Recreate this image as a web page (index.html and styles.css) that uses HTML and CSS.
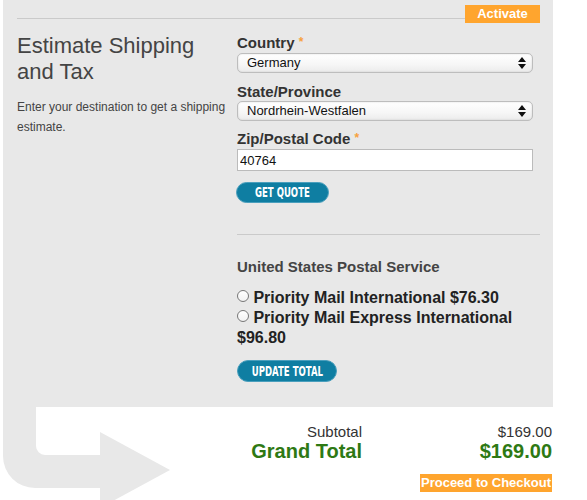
FILE: index.html
```html
<!DOCTYPE html>
<html>
<head>
<meta charset="utf-8">
<link rel="stylesheet" href="styles.css">
</head>
<body>
<div class="page">
  <svg class="arrow" width="200" height="110" viewBox="0 400 200 110" aria-hidden="true">
    <path d="M3 400 L3 456 A32 32 0 0 0 35 488 L100 488 L100 508 L170 470 L100 432 L100 455 L45 455 A9 9 0 0 1 36 446 L36 400 Z" fill="#e8e8e8"/>
  </svg>
  <section class="panel">
    <div class="topbar">
      <div class="rule"></div>
      <a class="activate">Activate</a>
    </div>
    <div class="cols">
      <div class="intro">
        <h2>Estimate Shipping and Tax</h2>
        <p>Enter your destination to get a shipping estimate.</p>
      </div>
      <form class="form">
        <label class="lbl first">Country <span class="req">*</span></label>
        <div class="selectbox">
          <select><option>Germany</option></select>
          <svg class="updown" width="8" height="12" viewBox="0 0 8 12"><path d="M4 0 L8 5 L0 5 Z M0 7 L8 7 L4 12 Z" fill="#111"/></svg>
        </div>
        <label class="lbl">State/Province</label>
        <div class="selectbox tight">
          <select><option>Nordrhein-Westfalen</option></select>
          <svg class="updown" width="8" height="12" viewBox="0 0 8 12"><path d="M4 0 L8 5 L0 5 Z M0 7 L8 7 L4 12 Z" fill="#111"/></svg>
        </div>
        <label class="lbl zip">Zip/Postal Code <span class="req">*</span></label>
        <input class="text" type="text" value="40764">
        <button type="button" class="pill quote"><span>GET QUOTE</span></button>
        <hr class="sep">
        <h3>United States Postal Service</h3>
        <div class="rates">
          <label><input type="radio" name="rate"> Priority Mail International $76.30</label>
          <label><input type="radio" name="rate"> Priority Mail Express International $96.80</label>
        </div>
        <button type="button" class="pill update"><span>UPDATE TOTAL</span></button>
      </form>
    </div>
  </section>
  <section class="summary">
    <div class="row sub"><span>Subtotal</span><span>$169.00</span></div>
    <div class="row grand"><span>Grand Total</span><span>$169.00</span></div>
    <div class="checkout"><a class="proceed">Proceed to Checkout</a></div>
  </section>
</div>
</body>
</html>
```
FILE: styles.css
```css
* { box-sizing: border-box; }
html, body { margin: 0; padding: 0; background: #fff; }
body { font-family: "Liberation Sans", Arial, sans-serif; color: #333; }

.page { position: relative; width: 587px; height: 500px; overflow: hidden; }

.arrow { position: absolute; left: 0; top: 400px; z-index: 0; }

.panel {
  position: relative;
  z-index: 1;
  margin-left: 3px;
  width: 550px;
  background: #e8e8e8;
  padding: 5px 13px 25px 14px;
}

.topbar { display: flex; height: 18px; }
.rule { flex: 1; border-top: 1px solid #cacaca; margin-top: 13px; }
.activate {
  width: 75px; height: 18px;
  background: #ffa52e;
  color: #fff; font-weight: bold; font-size: 13px;
  line-height: 18px; text-align: center;
}

.cols { display: grid; grid-template-columns: 220px 1fr; }

.intro h2 {
  margin: 10px 0 0;
  font-size: 22px; line-height: 26px; font-weight: normal;
  color: #444;
}
.intro p {
  margin: 12px 0 0;
  font-size: 12px; line-height: 20px; color: #444;
}

.form { display: flex; flex-direction: column; align-items: flex-start; }
.lbl { font-size: 15px; font-weight: bold; line-height: 18px; height: 18px; color: #333; margin-top: 10px; }
.lbl.first { margin-top: 11px; }
.lbl.zip { margin-top: 9px; }
.req { color: #f7a13c; font-size: 12px; line-height: 0; position: relative; top: -2px; }

.selectbox { position: relative; width: 296px; height: 20px; margin-top: 1px; }
.selectbox.tight { margin-top: 0; }
.selectbox select {
  -webkit-appearance: none; appearance: none;
  width: 100%; height: 20px;
  border: 1px solid #bdbdbd; border-radius: 5px;
  background: linear-gradient(#ffffff, #f6f6f6 60%, #ececec);
  box-shadow: inset 0 0 2px rgba(0,0,0,0.15);
  font: 13px "Liberation Sans", Arial, sans-serif; color: #111;
  padding: 0 0 0 9px; line-height: 18px;
}
.updown { position: absolute; right: 7px; top: 4px; pointer-events: none; }

.text {
  width: 296px; height: 22px; margin-top: 1px;
  border: 1px solid #bbb; background: #fff;
  font: 13px "Liberation Sans", Arial, sans-serif; color: #111;
  padding: 0 0 0 2px;
}

.pill {
  height: 21px; border-radius: 11px;
  background: #0f7ea2; border: 1px solid #4a9fbd;
  color: #fff; padding: 0;
  font-family: "Liberation Sans Narrow", "DejaVu Sans Condensed", "Liberation Sans", sans-serif;
  font-weight: bold; font-size: 14px; line-height: 19px;
  display: flex; align-items: center; justify-content: center;
  white-space: nowrap; overflow: visible;
}
.pill span { display: inline-block; transform: scaleX(0.68); }
.quote { width: 93px; margin: 11px 0 0 -1px; }
.update { width: 100px; height: 22px; margin-top: 12px; }

.sep { width: 100%; margin: 31px 0 0; border: 0; border-top: 1px solid #cacaca; height: 0; }

.form h3 { margin: 23px 0 0; font-size: 15px; line-height: 18px; color: #444; }

.rates { margin-top: 12px; font-size: 16px; font-weight: bold; line-height: 20px; color: #222; }
.rates label { display: inline; }
.rates label:first-child::after { content: "\A"; white-space: pre; }
.rates input {
  -webkit-appearance: none; appearance: none;
  width: 12px; height: 12px; margin: 0;
  border: 1px solid #777; border-radius: 50%;
  background: linear-gradient(#fff, #f2f2f2);
  vertical-align: 1px;
}

.summary {
  position: relative; z-index: 1;
  margin-left: 3px; width: 550px;
  padding: 16px 1px 0 0;
}
.row { display: grid; grid-template-columns: 359px 1fr; text-align: right; }
.row.sub { font-size: 15px; line-height: 18px; color: #333; }
.row.grand { font-size: 20px; line-height: 20px; font-weight: bold; color: #2e7914; }
.checkout { display: flex; justify-content: flex-end; margin-top: 13px; }
.proceed {
  width: 132px; height: 18px; background: #ffa52e;
  color: #fff; font-weight: bold; font-size: 13px; line-height: 18px; text-align: center;
}
```
